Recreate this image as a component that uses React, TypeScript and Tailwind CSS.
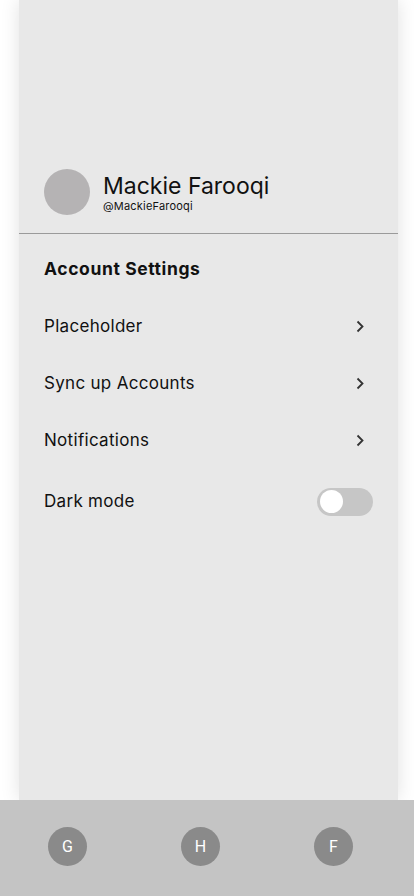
const ITEMS = ['Placeholder', 'Sync up Accounts', 'Notifications'];
const TABS = ['G', 'H', 'F'];

function Chevron() {
  return (
    <svg width="8" height="13" viewBox="0 0 8 13" fill="none">
      <path d="M1.5 1.5 6.5 6.5 1.5 11.5" stroke="#333" strokeWidth="1.8" />
    </svg>
  );
}

export default function App() {
  return (
    <div
      className="flex h-[896px] w-[414px] flex-col bg-white text-[#111]"
      style={{ fontFamily: 'Inter, "Liberation Sans", sans-serif' }}
    >
      {/* Settings panel */}
      <div className="ml-[19px] flex w-[379px] flex-1 flex-col bg-[#e8e8e8] shadow-[0_0_18px_rgba(0,0,0,0.12)]">
        <div className="flex items-center gap-[13px] px-[25px] pt-[169px]">
          <div className="h-[46px] w-[46px] rounded-full bg-[#b5b3b4]" />
          <div className="flex flex-col">
            <span className="text-[23px] leading-[28px]">Mackie Farooqi</span>
            <span className="text-[11px] leading-[13px] tracking-[0.2px]">@MackieFarooqi</span>
          </div>
        </div>
        <div className="mt-[18px] h-px bg-[#9a9a9a]" />

        <div className="flex flex-col px-[25px] pt-[7px]">
          <div className="flex h-[57px] items-center text-[17.5px] font-bold tracking-[0.6px]">Account Settings</div>
          {ITEMS.map((label) => (
            <div key={label} className="flex h-[57px] items-center justify-between text-[17px] tracking-[0.3px]">
              <span>{label}</span>
              <span className="mr-[9px]">
                <Chevron />
              </span>
            </div>
          ))}
          <div className="mt-1 flex h-[57px] items-center justify-between text-[17px] tracking-[0.3px]">
            <span>Dark mode</span>
            <div className="flex h-[28px] w-[56px] items-center rounded-full bg-[#c6c6c6] pl-[3px]">
              <div className="h-[23px] w-[23px] rounded-full bg-white" />
            </div>
          </div>
        </div>
      </div>

      {/* Bottom tab bar */}
      <div className="flex h-[96px] items-start gap-[94px] bg-[#c4c4c4] pl-[48px] pt-[27px]">
        {TABS.map((t) => (
          <div
            key={t}
            className="flex h-[39px] w-[39px] items-center justify-center rounded-full bg-[#8a8a8a] text-[16px] text-white"
            style={{ fontFamily: 'Roboto, sans-serif' }}
          >
            {t}
          </div>
        ))}
      </div>
    </div>
  );
}
